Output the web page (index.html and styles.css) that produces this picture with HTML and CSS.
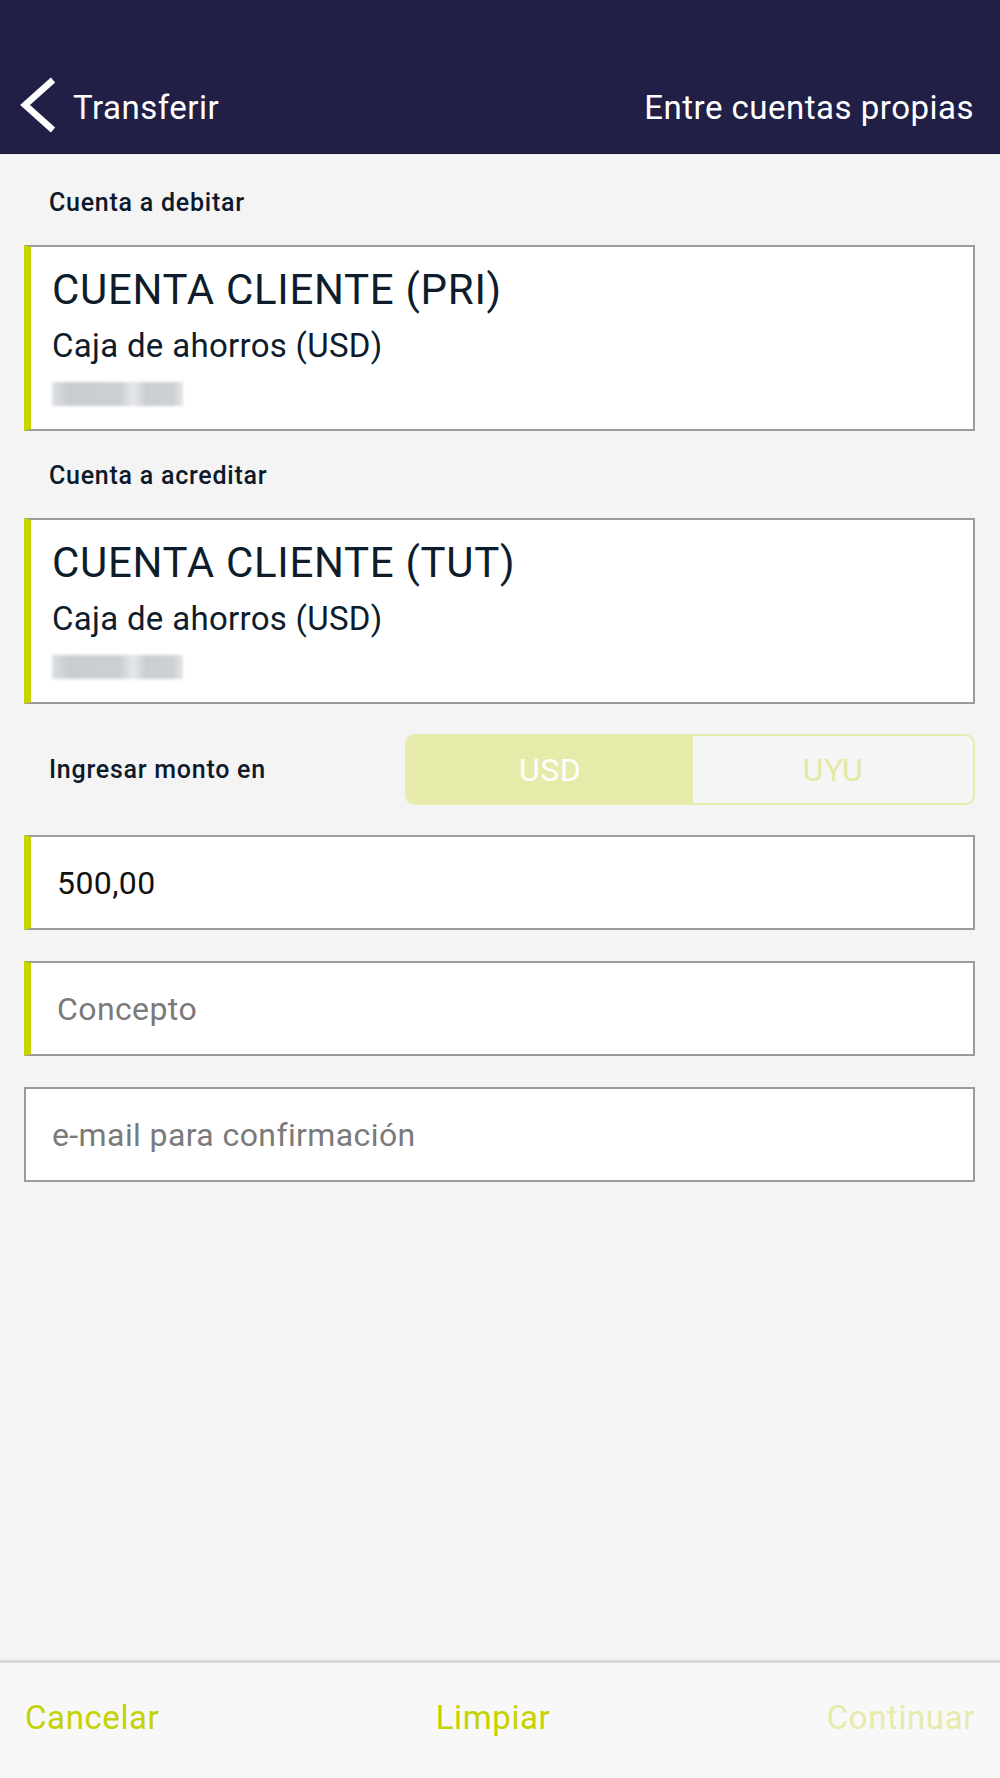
FILE: index.html
```html
<!DOCTYPE html>
<html>
  <head>
    <meta charset="utf-8">
    <title>Transferir</title>
    <link rel="stylesheet" href="styles.css">
  </head>
  <body>
    <div class="screen">
      <header class="topbar">
        <div class="topbar-row">
          <a class="back" href="#">
            <svg class="back-icon" width="40" height="58" viewBox="0 0 40 58">
              <polyline points="35,4 7,29 35,54" fill="none" stroke="#fff" stroke-width="6.5" />
            </svg>
            <span>Transferir</span>
          </a>
          <span class="topbar-title">Entre cuentas propias</span>
        </div>
      </header>

      <main class="content">
        <div class="field-label">Cuenta a debitar</div>
        <div class="account-card">
          <div class="account-name">CUENTA CLIENTE (PRI)</div>
          <div class="account-type">Caja de ahorros (USD)</div>
          <div class="account-number"></div>
        </div>

        <div class="field-label">Cuenta a acreditar</div>
        <div class="account-card">
          <div class="account-name">CUENTA CLIENTE (TUT)</div>
          <div class="account-type">Caja de ahorros (USD)</div>
          <div class="account-number"></div>
        </div>

        <div class="currency-row">
          <div class="field-label inline">Ingresar monto en</div>
          <div class="currency-toggle">
            <button class="currency active">USD</button>
            <button class="currency">UYU</button>
          </div>
        </div>

        <div class="input-box required">
          <span class="value">500,00</span>
        </div>
        <div class="input-box required">
          <span class="placeholder">Concepto</span>
        </div>
        <div class="input-box">
          <span class="placeholder">e-mail para confirmación</span>
        </div>
      </main>

      <footer class="actions">
        <a class="action" href="#">Cancelar</a>
        <a class="action" href="#">Limpiar</a>
        <a class="action disabled" href="#">Continuar</a>
      </footer>
    </div>
  </body>
</html>
```

FILE: styles.css
```css
body {
  margin: 0;
  font-family: Roboto, "Liberation Sans", sans-serif;
  background-color: #f4f4f4;
}
.screen {
  width: 1000px;
  height: 1778px;
  display: flex;
  flex-direction: column;
}

/* barra superior */
.topbar {
  height: 154px;
  background-color: #221f47;
  border-bottom: 1px solid #16142f;
  padding: 80px 26px 0 18px;
  box-sizing: border-box;
}
.topbar-row {
  height: 56px;
  display: flex;
  align-items: center;
  justify-content: space-between;
  color: #fff;
  font-size: 33px;
  line-height: 40px;
  letter-spacing: 0.5px;
}
.back {
  display: flex;
  align-items: center;
  color: #fff;
  text-decoration: none;
}
.back-icon {
  margin: 0 15px 6px 0;
}

/* contenido */
.content {
  flex: 1;
  padding: 34px 25px 0 24px;
}
.field-label {
  font-size: 25px;
  font-weight: 500;
  line-height: 30px;
  letter-spacing: 0.75px;
  color: #0d1a2b;
  padding-left: 25px;
  margin-bottom: 27px;
}
.field-label.inline {
  margin-bottom: 0;
}
.account-card {
  background-color: #fff;
  border: 2px solid #9b9b9b;
  border-left: 7px solid #c8d600;
  padding: 18px 20px 23px 21px;
  margin-bottom: 30px;
  color: #0e1c2c;
}
.account-name {
  font-size: 42px;
  line-height: 50px;
  letter-spacing: 0.7px;
}
.account-type {
  font-size: 33px;
  line-height: 40px;
  margin-top: 11px;
  letter-spacing: 0.3px;
}
.account-number {
  width: 131px;
  height: 24px;
  margin-top: 16px;
  background: linear-gradient(90deg, #dcdfe2 0, #c9cdd1 12%, #cbcfd3 52%, #e6e8ea 62%, #cacdd1 72%, #cdd1d4 92%, #e4e6e8 100%);
  filter: blur(1.5px);
}

.currency-row {
  display: flex;
  align-items: center;
  justify-content: space-between;
  height: 71px;
  margin: 31px 0 30px;
}
.account-card + .currency-row {
  margin-top: 1px;
}
.currency-toggle {
  display: flex;
  width: 570px;
  height: 71px;
  border: 2px solid #e6ebaa;
  border-radius: 10px;
  box-sizing: border-box;
  overflow: hidden;
}
.currency {
  flex: 1;
  border: none;
  background-color: #f5f5f5;
  font-family: Roboto, "Liberation Sans", sans-serif;
  font-size: 32px;
  letter-spacing: 0.5px;
  color: #e3e9a4;
  padding: 0;
}
.currency.active {
  flex: 0 0 286px;
  background-color: #e6ebaa;
  color: #fff;
}

.input-box {
  height: 95px;
  background-color: #fff;
  border: 2px solid #9b9b9b;
  padding-left: 26px;
  display: flex;
  align-items: center;
  margin-bottom: 31px;
  box-sizing: border-box;
  font-size: 32px;
  letter-spacing: 0.4px;
}
.input-box.required {
  border-left: 7px solid #c8d600;
}
.value {
  color: #111;
}
.placeholder {
  color: #7a7a7a;
}

/* botones inferiores */
.actions {
  height: 118px;
  border-top: 3px solid #d9d9d9;
  background-color: #f8f8f8;
  box-sizing: border-box;
  display: flex;
  align-items: center;
  justify-content: space-between;
  padding: 0 25px 6px 25px;
}
.action {
  font-size: 33px;
  letter-spacing: 0.6px;
  color: #c4d300;
  text-decoration: none;
}
.action.disabled {
  color: #e6ebaa;
}
```
